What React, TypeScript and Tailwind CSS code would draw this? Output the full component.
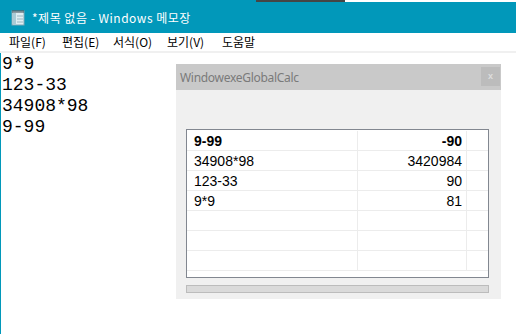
const rows = [
  { expr: "9-99", result: "-90", bold: true },
  { expr: "34908*98", result: "3420984" },
  { expr: "123-33", result: "90" },
  { expr: "9*9", result: "81" },
  { expr: "", result: "" },
  { expr: "", result: "" },
  { expr: "", result: "" },
];

const menus = [
  { label: "파일(F)", w: "w-[53px]" },
  { label: "편집(E)", w: "w-[51px]" },
  { label: "서식(O)", w: "w-[54px]" },
  { label: "보기(V)", w: "w-[55px]" },
  { label: "도움말", w: "w-[40px]" },
];

const NotepadIcon = () => (
  <svg width="14" height="17" viewBox="0 0 14 17">
    <rect x="1" y="2" width="12" height="14" fill="#dfeef3" stroke="#7fa6b4" strokeWidth="1" />
    <rect x="2" y="4" width="3" height="11" fill="#a9cbd6" />
    <line x1="6" y1="7" x2="12" y2="7" stroke="#9ab8c2" />
    <line x1="6" y1="10" x2="12" y2="10" stroke="#9ab8c2" />
    <line x1="6" y1="13" x2="12" y2="13" stroke="#9ab8c2" />
    <line x1="2" y1="1" x2="2" y2="4" stroke="#3b4a52" />
    <line x1="4" y1="1" x2="4" y2="4" stroke="#3b4a52" />
    <line x1="6" y1="1" x2="6" y2="4" stroke="#3b4a52" />
    <line x1="8" y1="1" x2="8" y2="4" stroke="#3b4a52" />
    <line x1="10" y1="1" x2="10" y2="4" stroke="#3b4a52" />
    <line x1="12" y1="1" x2="12" y2="4" stroke="#3b4a52" />
  </svg>
);

export default function App() {
  return (
    <div className="relative w-[516px] h-[334px] overflow-hidden bg-white">
      {/* notepad window */}
      <div className="flex flex-col h-full">
        <div className="flex h-[2px]">
          <div className="w-[256px] bg-[#0198ba]" />
          <div className="w-[89px] bg-[#454545]" />
          <div className="flex-1 bg-white" />
        </div>
        <div className="h-[31px] bg-[#0198ba] flex items-center pl-[11px] text-white text-[12px] font-['Noto_Sans_CJK_KR',sans-serif]">
          <NotepadIcon />
          <span className="ml-[7px] tracking-[0.5px]">*제목 없음 - Windows 메모장</span>
        </div>
        <div className="h-[18px] flex items-center pl-[9px] text-[12px] text-black font-['Noto_Sans_CJK_KR',sans-serif]">
          {menus.map((m) => (
            <span key={m.label} className={m.w}>
              {m.label}
            </span>
          ))}
        </div>
        <div className="h-[2px] bg-[#f0f0f0]" />
        <div className="flex-1 border-l border-[#0198ba] pl-[1px] pt-[1px] font-['Liberation_Mono',monospace] text-[18px] leading-[21px] text-black">
          <div>9*9</div>
          <div>123-33</div>
          <div>34908*98</div>
          <div>9-99</div>
        </div>
      </div>

      {/* calculator window */}
      <div className="absolute left-[176px] top-[64px] w-[325px] h-[235px] bg-[#f0f0f0] flex flex-col">
        <div className="h-[26px] bg-[#c9c9c9] flex items-start justify-between pl-[4px] pr-[1px]">
          <span className="mt-[5px] text-[12px] text-[#7a7a7a] font-['Noto_Sans',sans-serif] tracking-[-0.3px]">
            WindowexeGlobalCalc
          </span>
          <div className="mt-[3px] w-[19px] h-[19px] bg-[#bcbcbc] flex items-center justify-center text-[9px] font-bold text-[#dedede] font-['Liberation_Sans',sans-serif]">
            x
          </div>
        </div>
        <div className="pl-[10px] pr-[12px] pt-[39px]">
          <div className="h-[149px] border border-[#828790] bg-white overflow-hidden pt-[1px] font-['Liberation_Sans',sans-serif] text-[14px] text-black">
            {rows.map((r, i) => (
              <div key={i} className={`flex h-[20px] ${r.bold ? "font-bold" : ""}`}>
                <div className="w-[171px] border-b border-r border-[#ececec] pl-[7px] pt-[2px] leading-[16px]">
                  {r.expr}
                </div>
                <div className="w-[109px] border-b border-r border-[#ececec] pr-[4px] pt-[2px] leading-[16px] text-right">
                  {r.result}
                </div>
                <div className="flex-1 border-b border-[#ececec]" />
              </div>
            ))}
          </div>
          <div className="mt-[7px] h-[8px] border border-[#bcbcbc] bg-[#dadada]" />
        </div>
      </div>
    </div>
  );
}
